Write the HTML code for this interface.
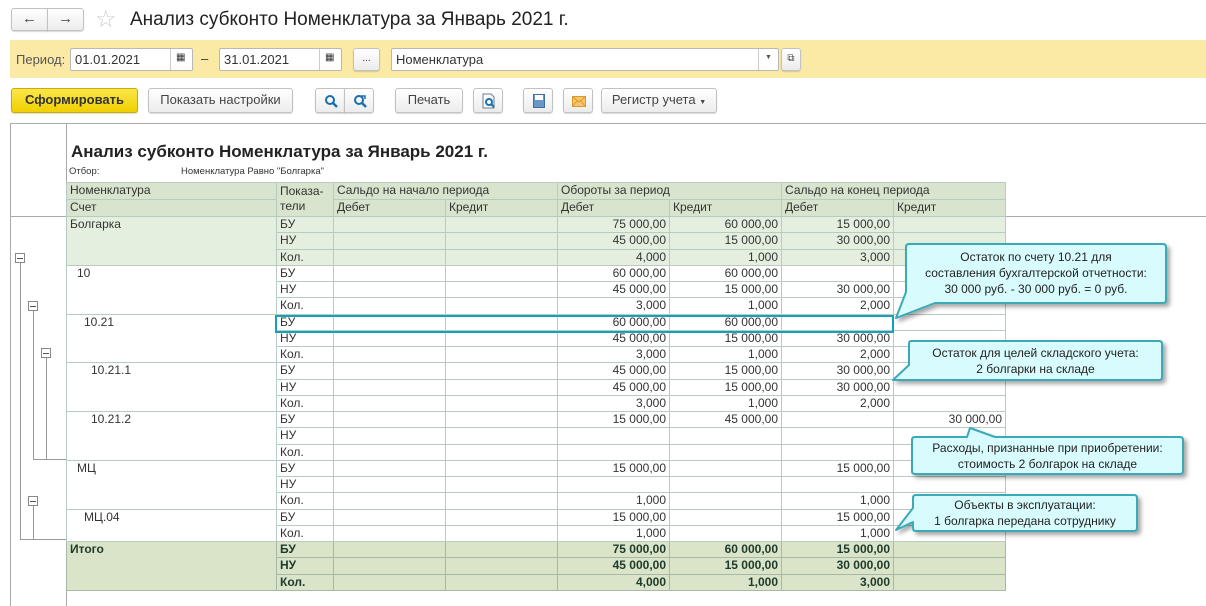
<!DOCTYPE html>
<html><head><meta charset="utf-8"><style>
*{box-sizing:border-box;margin:0;padding:0}
body{width:1206px;height:606px;background:#fff;font-family:"Liberation Sans",Arial,sans-serif;color:#333;position:relative;overflow:hidden}
.a{position:absolute}
.btn{position:absolute;border:1px solid #c2c2c2;border-radius:3px;background:linear-gradient(#fff,#ececec);box-shadow:0 1px 1px rgba(0,0,0,.15);font-size:13px;color:#444;text-align:center;line-height:22px}
.fld{position:absolute;border:1px solid #b8b8b8;border-radius:2px;background:#fff;font-size:13px;line-height:21px;padding-left:4px;color:#333}
table{border-collapse:collapse;table-layout:fixed;position:absolute;left:66px;top:182px;font-size:12px;width:939px}
td{border:1px solid #b7cbc0;height:16.25px;padding:0 3px;line-height:14px;white-space:nowrap;overflow:hidden;vertical-align:top}
td.n{text-align:right}
.h td{background:#d9e4cf;height:17px}
.g td{background:#e5efdf}
.t td{background:#d9e4c9;font-weight:bold;color:#1e3a2a;height:16.33px}
.t td{border-color:#a8b8a8}
.box{position:absolute;width:10px;height:10px;border:1px solid #888;background:#fff}
.box:after{content:"";position:absolute;left:1px;right:1px;top:3.5px;height:1px;background:#555}
.vl{position:absolute;width:1px;background:#999}
.hl{position:absolute;height:1px;background:#999}
.ct{position:absolute;font-size:12px;text-align:center;color:#222;line-height:16px}
</style></head><body>
<div class="btn" style="left:11px;top:8px;width:37px;height:23px;border-radius:3px 0 0 3px;font-size:15px;line-height:20px">&#8592;</div>
<div class="btn" style="left:47px;top:8px;width:37px;height:23px;border-radius:0 3px 3px 0;font-size:15px;line-height:20px">&#8594;</div>
<div class="a" style="left:95px;top:5px;font-size:24px;color:#ccc">&#9734;</div>
<div class="a" style="left:130px;top:9px;font-size:19px;color:#222">Анализ субконто Номенклатура за Январь 2021 г.</div>
<div class="a" style="left:10px;top:40px;width:1196px;height:38px;background:#fbeaa5"></div>
<div class="a" style="left:16px;top:52px;font-size:13px;color:#555">Период:</div>
<div class="fld" style="left:70px;top:48px;width:123px;height:23px">01.01.2021</div>
<div class="a" style="left:170px;top:49px;width:1px;height:21px;background:#ccc"></div>
<div class="a" style="left:176px;top:52px;font-size:10px">&#9638;</div>
<div class="a" style="left:201px;top:51px;font-size:13px">–</div>
<div class="fld" style="left:219px;top:48px;width:123px;height:23px">31.01.2021</div>
<div class="a" style="left:319px;top:49px;width:1px;height:21px;background:#ccc"></div>
<div class="a" style="left:325px;top:52px;font-size:10px">&#9638;</div>
<div class="btn" style="left:353px;top:48px;width:27px;height:23px;font-size:10px;line-height:20px">...</div>
<div class="fld" style="left:391px;top:48px;width:388px;height:23px">Номенклатура</div>
<div class="a" style="left:758px;top:49px;width:1px;height:21px;background:#ccc"></div>
<div class="a" style="left:765px;top:54px;font-size:7px;color:#555">&#9660;</div>
<div class="btn" style="left:781px;top:48px;width:20px;height:23px;font-size:10px;line-height:20px">&#10697;</div>
<div class="btn" style="left:11px;top:88px;width:127px;height:25px;background:linear-gradient(#fbe64a,#f0d000);border-color:#c8ac00;font-weight:bold;color:#333">Сформировать</div>
<div class="btn" style="left:148px;top:88px;width:145px;height:25px">Показать настройки</div>
<div class="btn" style="left:315px;top:88px;width:30px;height:25px;border-radius:3px 0 0 3px"><svg class="a" style="left:8px;top:5px" width="14" height="14"><circle cx="6" cy="6" r="4" fill="none" stroke="#1a6fb0" stroke-width="2"/><path d="M9 9 L13 13" stroke="#1a6fb0" stroke-width="2.5"/></svg></div>
<div class="btn" style="left:344px;top:88px;width:30px;height:25px;border-radius:0 3px 3px 0"><svg class="a" style="left:8px;top:5px" width="14" height="14"><circle cx="6" cy="6" r="4" fill="none" stroke="#1a6fb0" stroke-width="2"/><path d="M9 9 L13 13" stroke="#1a6fb0" stroke-width="2.5"/><path d="M8 2 L12 2 L12 5" fill="none" stroke="#1a6fb0" stroke-width="1.5"/></svg></div>
<div class="btn" style="left:395px;top:88px;width:68px;height:25px">Печать</div>
<div class="btn" style="left:473px;top:88px;width:30px;height:25px"><svg class="a" style="left:8px;top:4px" width="14" height="16"><path d="M1 1 H9 L12 4 V15 H1 Z" fill="#fff" stroke="#6a7d96"/><circle cx="7" cy="9" r="3" fill="none" stroke="#1a6fb0" stroke-width="2"/><path d="M9 11 L12 14" stroke="#1a6fb0" stroke-width="2"/></svg></div>
<div class="btn" style="left:523px;top:88px;width:30px;height:25px"><div class="a" style="left:9px;top:5px;width:12px;height:14px;background:#6b97c8;border:1px solid #3e6ea3"></div><div class="a" style="left:11px;top:6px;width:8px;height:5px;background:#fff"></div></div>
<div class="btn" style="left:563px;top:88px;width:30px;height:25px"><svg class="a" style="left:8px;top:7px" width="14" height="11"><rect x=".5" y=".5" width="13" height="10" fill="#f6c46a" stroke="#d99a2a"/><path d="M1 1 L7 6 L13 1 M1 10 L5 5 M13 10 L9 5" fill="none" stroke="#d99a2a"/></svg></div>
<div class="btn" style="left:601px;top:88px;width:116px;height:25px">Регистр учета <span style="font-size:7px">&#9660;</span></div>
<div class="hl" style="left:10px;top:123px;width:1196px;background:#aaa"></div>
<div class="vl" style="left:10px;top:123px;height:483px;background:#aaa"></div>
<div class="vl" style="left:66px;top:123px;height:483px;background:#aaa"></div>
<div class="hl" style="left:10px;top:216px;width:56px;background:#aaa"></div>
<div class="hl" style="left:1005px;top:216px;width:201px;background:#aaa"></div>
<div class="a" style="left:71px;top:142px;font-size:17px;font-weight:bold;color:#222">Анализ субконто Номенклатура за Январь 2021 г.</div>
<div class="a" style="left:69px;top:166px;font-size:9.5px;color:#333">Отбор:</div>
<div class="a" style="left:181px;top:166px;font-size:9.5px;color:#333">Номенклатура Равно "Болгарка"</div>
<div class="vl" style="left:20px;top:263px;height:277px"></div>
<div class="hl" style="left:20px;top:539px;width:46px"></div>
<div class="vl" style="left:33px;top:311px;height:148px"></div>
<div class="hl" style="left:33px;top:459px;width:33px"></div>
<div class="vl" style="left:46px;top:358px;height:101px"></div>
<div class="vl" style="left:33px;top:506px;height:34px"></div>
<div class="box" style="left:15px;top:253px"></div>
<div class="box" style="left:28px;top:301px"></div>
<div class="box" style="left:41px;top:348px"></div>
<div class="box" style="left:28px;top:496px"></div>
<table>
<colgroup><col style="width:210px"><col style="width:57px"><col style="width:112px"><col style="width:112px"><col style="width:112px"><col style="width:112px"><col style="width:112px"><col style="width:112px"></colgroup>
<tr class="h"><td>Номенклатура</td><td rowspan="2" style="line-height:15px;padding-top:1px">Показа-<br>тели</td><td colspan="2">Сальдо на начало периода</td><td colspan="2">Обороты за период</td><td colspan="2">Сальдо на конец периода</td></tr>
<tr class="h"><td>Счет</td><td>Дебет</td><td>Кредит</td><td>Дебет</td><td>Кредит</td><td>Дебет</td><td>Кредит</td></tr>
<tr class="g"><td rowspan="3">Болгарка</td><td>БУ</td><td></td><td></td><td class="n">75 000,00</td><td class="n">60 000,00</td><td class="n">15 000,00</td><td></td></tr>
<tr class="g"><td>НУ</td><td></td><td></td><td class="n">45 000,00</td><td class="n">15 000,00</td><td class="n">30 000,00</td><td></td></tr>
<tr class="g"><td>Кол.</td><td></td><td></td><td class="n">4,000</td><td class="n">1,000</td><td class="n">3,000</td><td></td></tr>
<tr><td rowspan="3" style="padding-left:10px">10</td><td>БУ</td><td></td><td></td><td class="n">60 000,00</td><td class="n">60 000,00</td><td></td><td></td></tr>
<tr><td>НУ</td><td></td><td></td><td class="n">45 000,00</td><td class="n">15 000,00</td><td class="n">30 000,00</td><td></td></tr>
<tr><td>Кол.</td><td></td><td></td><td class="n">3,000</td><td class="n">1,000</td><td class="n">2,000</td><td></td></tr>
<tr><td rowspan="3" style="padding-left:17px">10.21</td><td>БУ</td><td></td><td></td><td class="n">60 000,00</td><td class="n">60 000,00</td><td></td><td></td></tr>
<tr><td>НУ</td><td></td><td></td><td class="n">45 000,00</td><td class="n">15 000,00</td><td class="n">30 000,00</td><td></td></tr>
<tr><td>Кол.</td><td></td><td></td><td class="n">3,000</td><td class="n">1,000</td><td class="n">2,000</td><td></td></tr>
<tr><td rowspan="3" style="padding-left:24px">10.21.1</td><td>БУ</td><td></td><td></td><td class="n">45 000,00</td><td class="n">15 000,00</td><td class="n">30 000,00</td><td></td></tr>
<tr><td>НУ</td><td></td><td></td><td class="n">45 000,00</td><td class="n">15 000,00</td><td class="n">30 000,00</td><td></td></tr>
<tr><td>Кол.</td><td></td><td></td><td class="n">3,000</td><td class="n">1,000</td><td class="n">2,000</td><td></td></tr>
<tr><td rowspan="3" style="padding-left:24px">10.21.2</td><td>БУ</td><td></td><td></td><td class="n">15 000,00</td><td class="n">45 000,00</td><td></td><td class="n">30 000,00</td></tr>
<tr><td>НУ</td><td></td><td></td><td></td><td></td><td></td><td></td></tr>
<tr><td>Кол.</td><td></td><td></td><td></td><td></td><td></td><td></td></tr>
<tr><td rowspan="3" style="padding-left:10px">МЦ</td><td>БУ</td><td></td><td></td><td class="n">15 000,00</td><td></td><td class="n">15 000,00</td><td></td></tr>
<tr><td>НУ</td><td></td><td></td><td></td><td></td><td></td><td></td></tr>
<tr><td>Кол.</td><td></td><td></td><td class="n">1,000</td><td></td><td class="n">1,000</td><td></td></tr>
<tr><td rowspan="2" style="padding-left:17px">МЦ.04</td><td>БУ</td><td></td><td></td><td class="n">15 000,00</td><td></td><td class="n">15 000,00</td><td></td></tr>
<tr><td>Кол.</td><td></td><td></td><td class="n">1,000</td><td></td><td class="n">1,000</td><td></td></tr>
<tr class="t"><td rowspan="3">Итого</td><td>БУ</td><td></td><td></td><td class="n">75 000,00</td><td class="n">60 000,00</td><td class="n">15 000,00</td><td></td></tr>
<tr class="t"><td>НУ</td><td></td><td></td><td class="n">45 000,00</td><td class="n">15 000,00</td><td class="n">30 000,00</td><td></td></tr>
<tr class="t"><td>Кол.</td><td></td><td></td><td class="n">4,000</td><td class="n">1,000</td><td class="n">3,000</td><td></td></tr>
</table>
<div class="a" style="left:275px;top:315px;width:619px;height:18px;border:2px solid #14a0bf"></div>
<svg class="a" style="left:0;top:0" width="1206" height="606">
<defs><filter id="s" x="-10%" y="-20%" width="130%" height="160%"><feDropShadow dx="3" dy="3" stdDeviation="2" flood-color="#000" flood-opacity=".35"/></filter></defs>
<g fill="#d8fbfd" stroke="#3aa9b8" stroke-width="2" filter="url(#s)" stroke-linejoin="round">
<path d="M909,244 H1163 Q1166,244 1166,247 V300 Q1166,303 1163,303 H935 L896,318 L906,292 V247 Q906,244 909,244 Z"/>
<path d="M911,341 H1159 Q1162,341 1162,344 V377 Q1162,380 1159,380 H925 L893,380 L909,365 V344 Q909,341 911,341 Z"/>
<path d="M915,437 H967 L970,428 L995,437 H1180 Q1183,437 1183,440 V471 Q1183,474 1180,474 H915 Q912,474 912,471 V440 Q912,437 915,437 Z"/>
<path d="M916,495 H1134 Q1137,495 1137,498 V528 Q1137,531 1134,531 H916 Q913,531 913,528 V522 L896,530 L913,508 V498 Q913,495 916,495 Z"/>
</g></svg>
<div class="ct" style="left:906px;top:249px;width:260px">Остаток по счету 10.21 для<br>составления бухгалтерской отчетности:<br>30 000 руб. - 30 000 руб. = 0 руб.</div>
<div class="ct" style="left:909px;top:345px;width:253px">Остаток для целей складского учета:<br>2 болгарки на складе</div>
<div class="ct" style="left:912px;top:440px;width:271px">Расходы, признанные при приобретении:<br>стоимость 2 болгарок на складе</div>
<div class="ct" style="left:913px;top:497px;width:224px">Объекты в эксплуатации:<br>1 болгарка передана сотруднику</div>
</body></html>
